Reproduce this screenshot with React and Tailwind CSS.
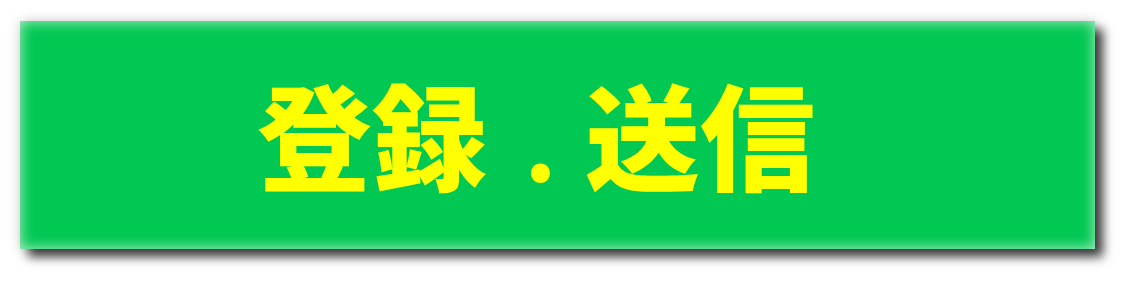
import React from 'react';

const App = () => {
  return (
    <div className="w-[1136px] h-[290px] bg-white pt-[21px] pl-[20px]">
      <div className="w-[1075px] h-[228px] bg-[#00c853] flex items-center pl-[237px] pb-[6px] shadow-[inset_0_0_14px_rgba(255,255,255,0.75),8px_8px_10px_rgba(0,0,0,0.75),0_0_12px_rgba(0,0,0,0.18)]">
        <div
          className="flex items-baseline text-[#ffff00] text-[115px] leading-none font-black whitespace-nowrap"
          style={{ fontFamily: '"Noto Sans CJK JP", "Noto Sans", sans-serif' }}
        >
          <span>登録</span>
          <span className="inline-block w-[98px] pl-[38px] text-[88px]">.</span>
          <span>送信</span>
        </div>
      </div>
    </div>
  );
};

export default App;
